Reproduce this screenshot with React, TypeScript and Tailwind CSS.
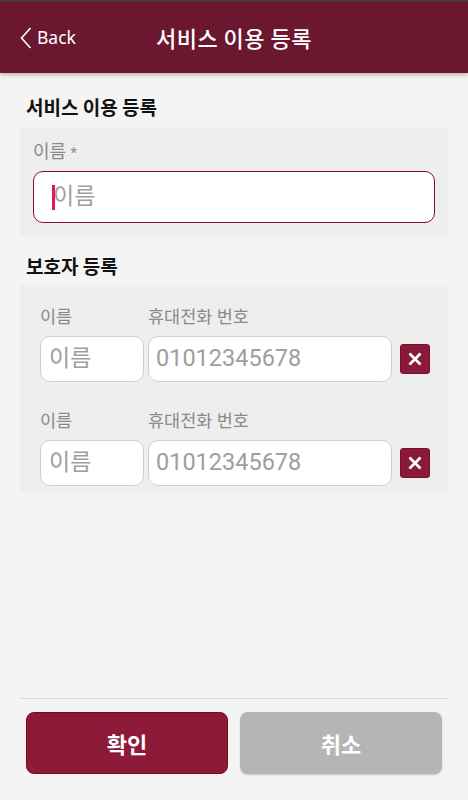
import React from "react";

const KR = { fontFamily: '"Noto Sans CJK KR", "Noto Sans", sans-serif' };
const RB = { fontFamily: 'Roboto, "Noto Sans CJK KR", sans-serif' };

function XBtn() {
  return (
    <div className="w-[30px] h-[30px] rounded-[3px] bg-[#8b1a3a] border border-[#7a1030] flex items-center justify-center shrink-0">
      <svg width="16" height="16" viewBox="0 0 16 16">
        <path d="M2.5 2.5 L13.5 13.5 M13.5 2.5 L2.5 13.5" stroke="#fff" strokeWidth="2.6" strokeLinecap="butt" />
      </svg>
    </div>
  );
}

function GuardianRow() {
  return (
    <div className="flex flex-col">
      <div className="flex h-[20px] items-center text-[17.5px] text-[#8a8a8a] leading-[20px]" style={RB}>
        <div className="w-[108px]">이름</div>
        <div>휴대전화 번호</div>
      </div>
      <div className="flex items-center mt-[9px]">
        <div className="w-[104px] h-[46px] bg-white border border-[#cfcfcf] rounded-[10px] flex items-center pl-[8px] text-[23px] text-[#9e9e9e]" style={RB}>
          이름
        </div>
        <div className="w-[244px] ml-[4px] h-[46px] bg-white border border-[#cfcfcf] rounded-[10px] flex items-center pl-[7px] text-[23.5px] text-[#9e9e9e]" style={RB}>
          01012345678
        </div>
        <div className="ml-[8px]">
          <XBtn />
        </div>
      </div>
    </div>
  );
}

export default function App() {
  return (
    <div className="w-[468px] h-[800px] bg-[#f4f4f4] flex flex-col overflow-hidden" style={KR}>
      <div className="h-[73px] shrink-0 bg-[#6b1730] border-t-2 border-[#4b3b3b] border-b border-b-[#8a0c1e] shadow-[0_2px_4px_rgba(0,0,0,0.25)] relative flex items-center justify-center z-10">
        <div className="absolute left-[20px] top-0 h-full flex items-center">
          <svg width="12" height="22" viewBox="0 0 12 22" className="mt-[2px]">
            <path d="M10.5 1 L1.5 11 L10.5 21" stroke="#fff" strokeWidth="1.6" fill="none" />
          </svg>
          <span className="ml-[5px] text-white text-[17.5px]" style={{ fontFamily: '"Noto Sans", sans-serif' }}>Back</span>
        </div>
        <div className="text-white text-[22px] font-medium tracking-[0.5px]">서비스 이용 등록</div>
      </div>

      <div className="flex-1 flex flex-col">
        <div className="pl-[26px] mt-[22px] text-[19px] font-bold text-[#111] leading-[24px]">서비스 이용 등록</div>
        <div className="mx-[20px] mt-[9px] bg-[#eeeeee] px-[13px] pt-[13px] pb-[13px]">
          <div className="text-[18px] text-[#8a8a8a] leading-[22px]" style={RB}>
            이름 <span className="text-[15px]">*</span>
          </div>
          <div className="mt-[7px] h-[52px] bg-white border-[1.5px] border-[#8a0c1e] rounded-[10px] flex items-center pl-[18px]">
            <span className="w-[3px] h-[25px] bg-[#e0175a] mr-[-2px]" />
            <span className="text-[23px] text-[#9e9e9e]" style={RB}>이름</span>
          </div>
        </div>

        <div className="pl-[26px] mt-[18px] text-[19px] font-bold text-[#111] leading-[24px]">보호자 등록</div>
        <div className="mx-[20px] mt-[7px] bg-[#eeeeee] pl-[20px] pt-[22px] pb-[6px] flex flex-col gap-[29px]">
          <GuardianRow />
          <GuardianRow />
        </div>

        <div className="flex-1" />
        <div className="mx-[20px] h-px bg-[#d8d8d8]" />
        <div className="flex justify-between px-[26px] mt-[13px] mb-[26px]">
          <button className="w-[202px] h-[62px] rounded-[8px] bg-[#8e1a3a] border border-[#7a0a1a] text-white text-[22px] font-bold">확인</button>
          <button className="w-[202px] h-[62px] rounded-[8px] bg-[#b5b5b5] shadow-[0_1px_2px_rgba(0,0,0,0.2)] text-white text-[22px] font-bold">취소</button>
        </div>
      </div>
    </div>
  );
}
